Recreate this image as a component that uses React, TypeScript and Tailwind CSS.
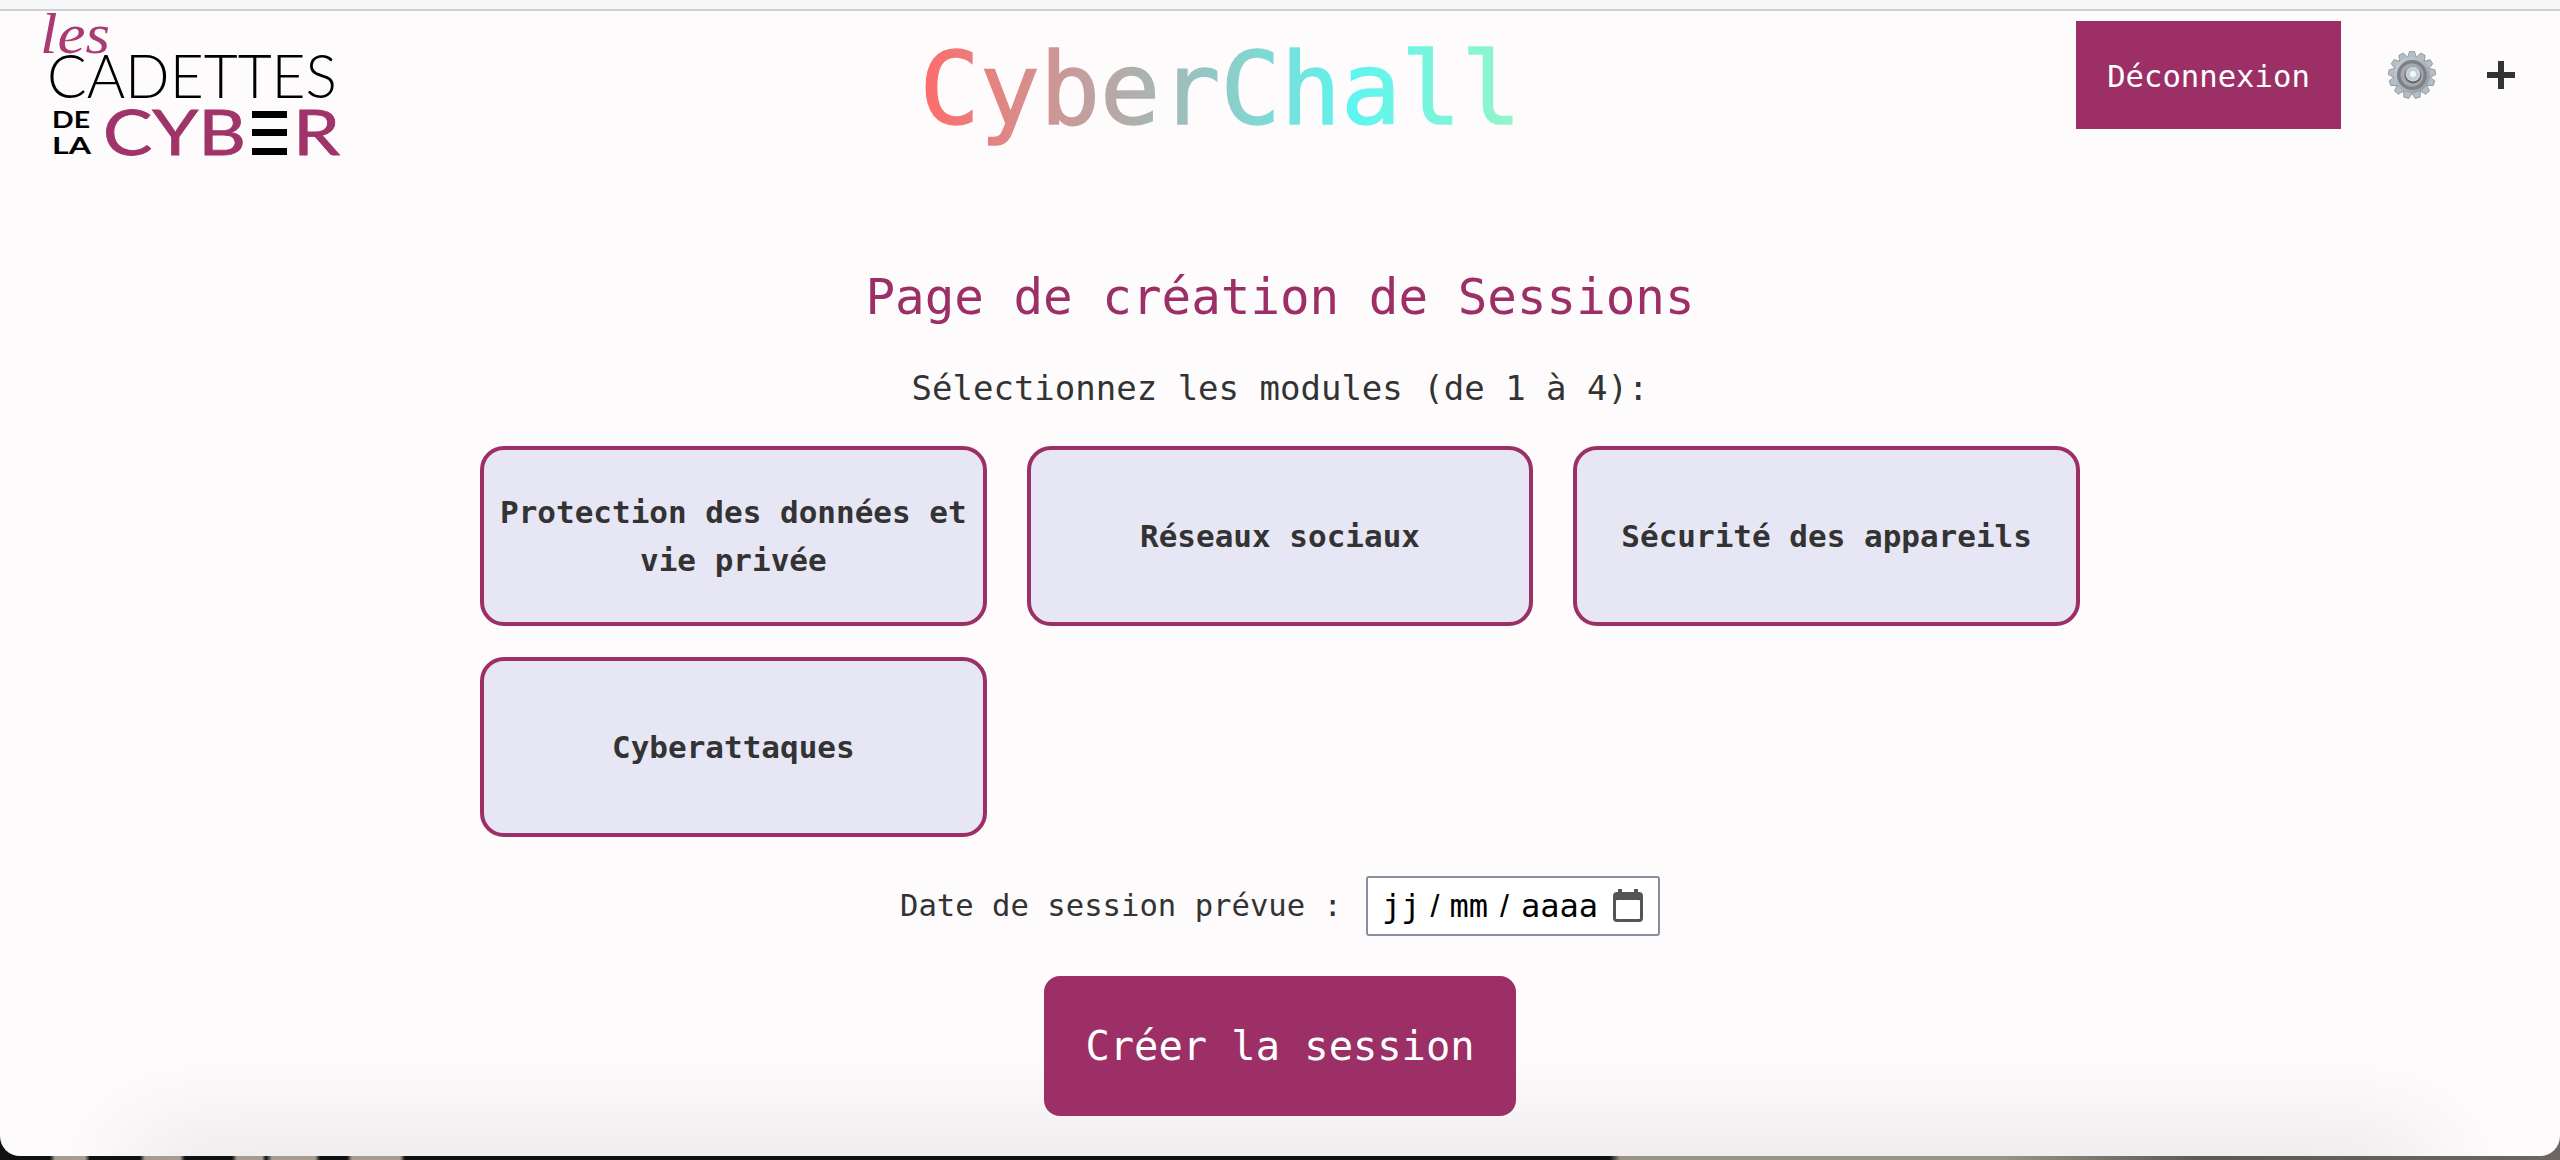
const MODULES = [
  'Protection des données et vie privée',
  'Réseaux sociaux',
  'Sécurité des appareils',
  'Cyberattaques',
];

function Logo() {
  return (
    <svg width="365" height="150" viewBox="0 0 365 150" className="shrink-0" role="img" aria-label="Les Cadettes de la Cyber">
      <text x="40" y="42" fontFamily="Liberation Serif, serif" fontStyle="italic" fontSize="58" fill="#a93a72" textLength="70" lengthAdjust="spacingAndGlyphs">
        les
      </text>
      <text x="47" y="87" fontFamily="Lato, sans-serif" fontWeight="300" fontSize="61" fill="#000" textLength="290" lengthAdjust="spacingAndGlyphs">
        CADETTES
      </text>
      <text x="52" y="117" fontFamily="Lato, sans-serif" fontWeight="700" fontSize="23" fill="#000" textLength="38" lengthAdjust="spacingAndGlyphs">
        DE
      </text>
      <text x="52" y="143" fontFamily="Lato, sans-serif" fontWeight="700" fontSize="23" fill="#000" textLength="39" lengthAdjust="spacingAndGlyphs">
        LA
      </text>
      <text x="103" y="144" fontFamily="Lato, sans-serif" fontWeight="400" fontSize="61" fill="#a03368" stroke="#a03368" strokeWidth="0.8" textLength="143" lengthAdjust="spacingAndGlyphs">
        CYB
      </text>
      <rect x="252" y="100" width="35" height="7" fill="#000" />
      <rect x="252" y="118" width="35" height="7" fill="#000" />
      <rect x="252" y="137" width="35" height="7" fill="#000" />
      <text x="293" y="144" fontFamily="Lato, sans-serif" fontWeight="400" fontSize="61" fill="#a03368" stroke="#a03368" strokeWidth="0.8" textLength="47" lengthAdjust="spacingAndGlyphs">
        R
      </text>
    </svg>
  );
}

function Gear() {
  const teeth = Array.from({ length: 13 }, (_, i) => (i * 360) / 13);
  return (
    <svg width="50" height="50" viewBox="0 0 50 50">
      <defs>
        <linearGradient id="gearBody" x1="0" y1="0" x2="1" y2="1">
          <stop offset="0" stopColor="#c9d3dc" />
          <stop offset="1" stopColor="#8d97a1" />
        </linearGradient>
      </defs>
      {teeth.map((a) => (
        <path key={a} d="M20 9 L22.5 1.5 H27.5 L30 9 Z" fill="#b4bec8" stroke="#6b6b6b" strokeWidth="0.5" transform={`rotate(${a} 25 25)`} />
      ))}
      <circle cx="25" cy="25" r="18" fill="url(#gearBody)" />
      <circle cx="25" cy="25" r="15" fill="#7d8186" />
      <circle cx="25" cy="25" r="11.5" fill="#a5a9ae" />
      <circle cx="26" cy="25" r="8.5" fill="#5f6367" />
      <circle cx="26" cy="24" r="7.5" fill="#c3d0da" />
      <circle cx="26" cy="24" r="3" fill="#f4f6f8" />
    </svg>
  );
}

export default function App() {
  return (
    <div className="h-[1160px] flex flex-col overflow-hidden font-['DejaVu_Sans_Mono',monospace] bg-[linear-gradient(90deg,#111_0,#111_50px,#a89c90_55px,#a89c90_85px,#111_90px,#111_140px,#a89c90_145px,#a89c90_180px,#111_185px,#111_232px,#a89c90_237px,#a89c90_262px,#111_266px,#a89c90_272px,#a89c90_315px,#111_320px,#111_347px,#a89c90_352px,#a89c90_400px,#111_405px,#111_1610px,#9a9388_1620px,#9a9388_2000px,#5f5751_2200px,#6d6560_2560px)]">
      <div className="h-[11px] shrink-0 bg-[#f6f7f9] border-b-2 border-[#d0d0d2]" />

      <main className="relative h-[1145px] shrink-0 rounded-b-[20px] bg-[#fdfbfc] overflow-hidden">
        {/* ombre du dock en bas */}
        <div className="absolute inset-x-[130px] -bottom-[40px] h-[40px] bg-black shadow-[0_0_110px_rgba(0,0,0,0.2)]" />

        <div className="relative flex flex-col items-center">
          {/* en-tête */}
          <header className="w-full flex items-start justify-between">
            <Logo />
            <h1 className="mt-[23px] text-[100px] leading-[112px] [-webkit-text-stroke:1.5px_transparent] bg-[linear-gradient(90deg,#ff6b6b_0%,#5ef5f0_72%,#96f5c8_100%)] bg-clip-text text-transparent">
              CyberChall
            </h1>
            <div className="w-[484px] flex items-center pt-[10px]">
              <button className="w-[265px] h-[108px] bg-[#9c2f65] text-white text-[30.6px] leading-[40px] pt-[4px]">Déconnexion</button>
              <div className="ml-[46px]">
                <Gear />
              </div>
              <svg width="28" height="28" viewBox="0 0 28 28" className="ml-[50px] shrink-0">
                <path d="M14 0v28M0 14h28" stroke="#333" strokeWidth="6" />
              </svg>
            </div>
          </header>

          {/* formulaire */}
          <h2 className="mt-[104px] text-[49.2px] leading-[64px] text-[#9c2f65]">Page de création de Sessions</h2>
          <p className="mt-[37px] text-[34px] leading-[44px] text-[#333]">Sélectionnez les modules (de 1 à 4):</p>

          <div className="mt-[36px] w-[1600px] grid grid-cols-3 gap-x-[40px] gap-y-[31px]">
            {MODULES.map((m) => (
              <button
                key={m}
                className="h-[180px] px-4 rounded-[24px] border-4 border-[#9c2f65] bg-[#e6e6f5] text-[31px] leading-[48px] font-bold text-[#333]"
              >
                {m}
              </button>
            ))}
          </div>

          <div className="mt-[39px] flex items-center gap-[24px]">
            <label className="text-[30.6px] leading-[40px] text-[#333]">Date de session prévue :</label>
            <div className="w-[294px] h-[60px] flex items-center pl-[14px] bg-white border-2 border-[#8c8c9c] rounded-[3px] text-[32px] leading-[40px] text-black">
              <span>jj</span>
              <span className="mx-[10px] font-['Liberation_Sans',sans-serif]">/</span>
              <span>mm</span>
              <span className="mx-[12px] font-['Liberation_Sans',sans-serif]">/</span>
              <span>aaaa</span>
              <svg width="32" height="34" viewBox="0 0 32 34" className="shrink-0 ml-[14px]">
                <path d="M8 0v4M24 0v4" stroke="#555" strokeWidth="4" />
                <rect x="1" y="3" width="30" height="30" rx="4" fill="#555" />
                <rect x="4" y="11" width="24" height="19" rx="1" fill="#fff" />
              </svg>
            </div>
          </div>

          <button className="mt-[40px] w-[472px] h-[140px] rounded-[16px] bg-[#9c2f65] text-white text-[40.4px] leading-[50px]">Créer la session</button>
        </div>
      </main>
    </div>
  );
}
